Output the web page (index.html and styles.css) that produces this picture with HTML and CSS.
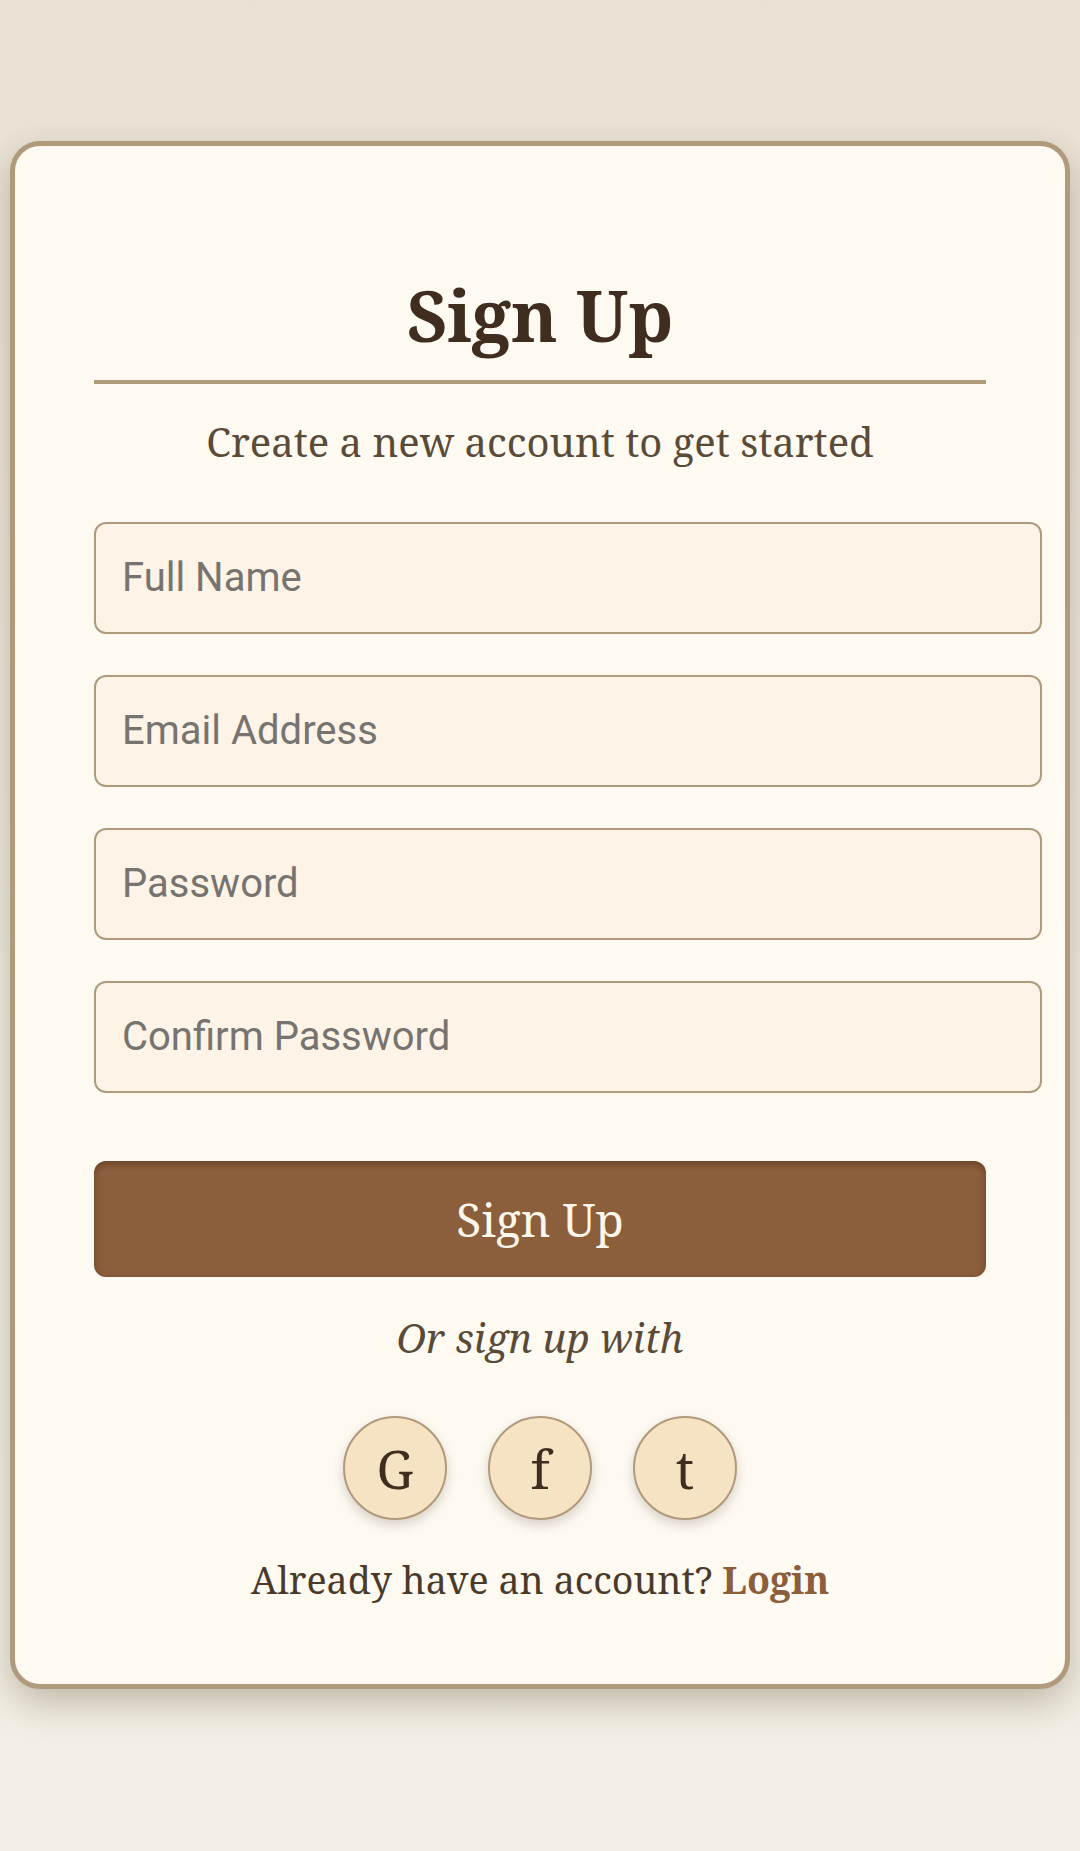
FILE: index.html
```html
<!DOCTYPE html>
<html lang="en">
<head>
<meta charset="utf-8">
<title>Sign Up</title>
<link rel="stylesheet" href="styles.css">
</head>
<body>
<main class="page">
  <section class="card">
    <h1 class="title">Sign Up</h1>
    <p class="subtitle">Create a new account to get started</p>
    <form class="form">
      <input class="field" type="text" placeholder="Full Name">
      <input class="field" type="email" placeholder="Email Address">
      <input class="field" type="password" placeholder="Password">
      <input class="field" type="password" placeholder="Confirm Password">
      <button class="submit" type="button">Sign Up</button>
    </form>
    <p class="alt">Or sign up with</p>
    <div class="socials">
      <a class="social" href="#">G</a>
      <a class="social" href="#">f</a>
      <a class="social" href="#">t</a>
    </div>
    <p class="footer">Already have an account? <a class="login" href="#">Login</a></p>
  </section>
</main>
</body>
</html>
```

FILE: styles.css
```css
html, body {
  margin: 0;
  padding: 0;
}
body {
  min-height: 1851px;
  background: linear-gradient(180deg, #e9e1d4 0%, #f1ece1 60%, #f3efe4 100%);
  font-family: "Noto Serif", "DejaVu Serif", serif;
  color: #3f2d1f;
}
.page {
  padding: 141px 10px 0;
}
.card {
  box-sizing: border-box;
  width: 1060px;
  background: #fefaf2;
  border: 5px solid #b09a7c;
  border-radius: 30px;
  padding: 80px 79px 78px;
  box-shadow: 0 14px 36px rgba(60, 45, 25, 0.28);
}
.title {
  margin: 41px 0 0;
  padding-bottom: 17px;
  border-bottom: 4px solid #b09a7c;
  text-align: center;
  font-size: 70px;
  line-height: 96px;
  font-weight: 700;
  color: #3f2d1f;
}
.subtitle {
  margin: 32px 0 0;
  text-align: center;
  font-size: 40px;
  line-height: 52px;
  color: #5a4a38;
}
.form {
  margin-top: 54px;
  display: flex;
  flex-direction: column;
  align-items: flex-start;
}
.field {
  box-sizing: content-box;
  width: 100%;
  height: 46px;
  margin: 0 0 41px;
  padding: 31px 26px;
  border: 2px solid #b09a7c;
  border-radius: 12px;
  background: #fdf4e7;
  font-family: Roboto, "Liberation Sans", sans-serif;
  font-size: 40px;
  line-height: 46px;
  color: #3f2d1f;
  outline: none;
}
.field::placeholder {
  color: #777370;
}
.submit {
  margin-top: 27px;
  width: 100%;
  height: 116px;
  border: none;
  border-radius: 12px;
  background: #8b5e3c;
  color: #fdf6ea;
  font-family: "Noto Serif", "DejaVu Serif", serif;
  font-size: 46px;
  box-shadow: inset 0 3px 7px rgba(40, 20, 5, 0.35);
  cursor: pointer;
}
.alt {
  margin: 35px 0 0;
  text-align: center;
  font-style: italic;
  font-size: 40px;
  line-height: 52px;
  color: #5a4a38;
}
.socials {
  margin-top: 52px;
  display: flex;
  justify-content: center;
  gap: 41px;
}
.social {
  box-sizing: border-box;
  width: 104px;
  height: 104px;
  border-radius: 50%;
  border: 2px solid #b09a7c;
  background: #f5e3c3;
  box-shadow: 0 5px 12px rgba(60, 45, 25, 0.2);
  display: flex;
  align-items: center;
  justify-content: center;
  font-size: 52px;
  color: #3f2d1f;
  text-decoration: none;
}
.footer {
  margin: 34px 0 0;
  text-align: center;
  font-size: 37.6px;
  line-height: 52px;
  color: #4a3a2a;
}
.login {
  color: #8b5e3c;
  font-weight: 700;
  text-decoration: none;
}
```
